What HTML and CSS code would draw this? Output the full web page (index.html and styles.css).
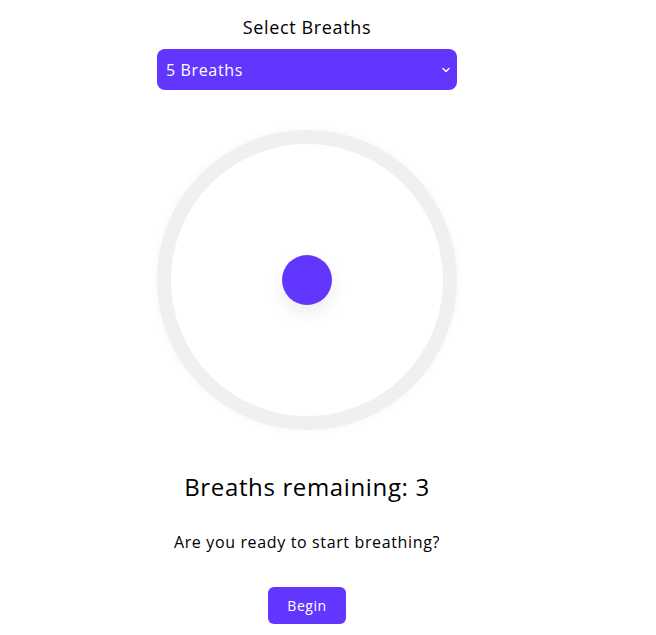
FILE: index.html
```html
<!DOCTYPE html>
<html>
<head>
<meta charset="utf-8">
<link rel="stylesheet" href="styles.css">
</head>
<body>
<main class="app">
  <label class="label">Select Breaths</label>
  <div class="select">
    <span class="select-text">5 Breaths</span>
    <svg class="chevron" width="8" height="6" viewBox="0 0 8 6"><path d="M1 1.5 L4 4.5 L7 1.5" fill="none" stroke="#fff" stroke-width="1.4" stroke-linecap="round" stroke-linejoin="round"/></svg>
  </div>
  <div class="ring">
    <div class="dot"></div>
  </div>
  <h2 class="remaining">Breaths remaining: 3</h2>
  <p class="prompt">Are you ready to start breathing?</p>
  <button class="begin">Begin</button>
</main>
</body>
</html>
```

FILE: styles.css
```css
html, body {
  margin: 0;
  padding: 0;
  background: #fff;
}
body {
  font-family: "Open Sans", "DejaVu Sans", sans-serif;
  color: #000;
  letter-spacing: 0.04em;
}
.app {
  width: 614px;
  display: flex;
  flex-direction: column;
  align-items: center;
  padding-top: 14px;
}
.label {
  font-size: 18px;
  line-height: 27px;
}
.select {
  margin-top: 8px;
  width: 300px;
  height: 41px;
  box-sizing: border-box;
  background: #6236ff;
  border-radius: 8px;
  display: flex;
  align-items: center;
  justify-content: space-between;
  padding: 0 7px 0 9px;
  color: #fff;
}
.select-text {
  font-size: 16px;
}
.chevron {
  display: block;
}
.ring {
  margin-top: 40px;
  width: 300px;
  height: 300px;
  box-sizing: border-box;
  border: 14px solid #f0f0f0;
  border-radius: 50%;
  background: #fff;
  box-shadow: 0 0 8px rgba(0,0,0,0.04);
  display: flex;
  align-items: center;
  justify-content: center;
}
.dot {
  width: 50px;
  height: 50px;
  border-radius: 50%;
  background: #6236ff;
  box-shadow: 0 8px 18px rgba(0,0,0,0.08);
}
.remaining {
  margin: 39px 0 0;
  font-size: 24px;
  font-weight: 400;
  line-height: 36px;
}
.prompt {
  margin: 25px 0 0;
  font-size: 16px;
  line-height: 24px;
}
.begin {
  margin-top: 33px;
  width: 78px;
  height: 37px;
  border: 0;
  border-radius: 6px;
  background: #6236ff;
  color: #fff;
  font-family: inherit;
  font-size: 14px;
  letter-spacing: 0.04em;
}
```
